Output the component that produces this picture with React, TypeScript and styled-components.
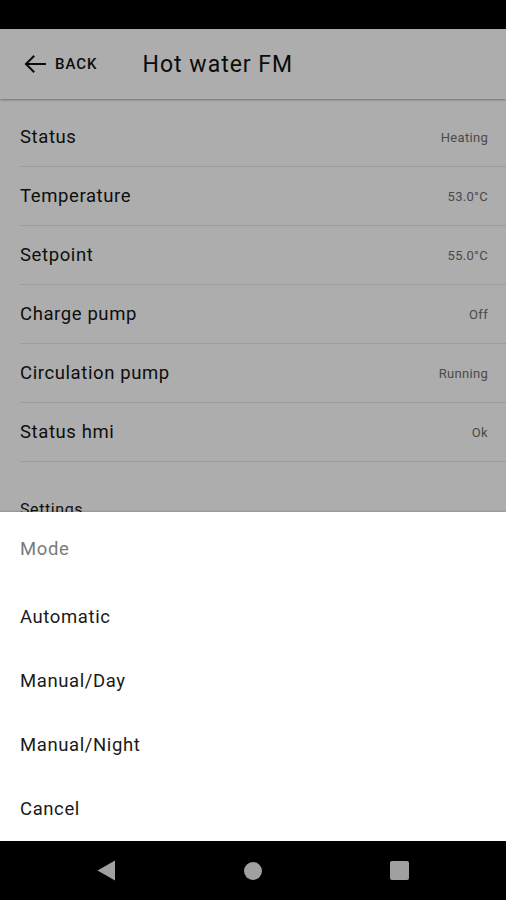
import React from "react";
import styled, { createGlobalStyle } from "styled-components";

const Global = createGlobalStyle`
  html, body { margin: 0; padding: 0; background: #000; }
  body { font-family: Roboto, "Noto Sans", "Liberation Sans", sans-serif; }
  * { box-sizing: border-box; }
`;

const Phone = styled.div`
  width: 506px;
  height: 900px;
  display: flex;
  flex-direction: column;
  overflow: hidden;
  background: #000;
`;

const StatusBar = styled.div`
  height: 29px;
  flex: none;
  background: #000;
`;

const Screen = styled.div`
  position: relative;
  flex: 1;
  background: #fff;
  overflow: hidden;
  display: flex;
  flex-direction: column;
`;

const Header = styled.header`
  height: 70px;
  flex: none;
  display: flex;
  align-items: center;
  background: #fff;
  box-shadow: 0 1px 2px rgba(0, 0, 0, 0.35);
  position: relative;
  z-index: 1;
`;

const BackButton = styled.button`
  display: flex;
  align-items: center;
  gap: 9px;
  margin-left: 23px;
  padding: 0;
  border: none;
  background: none;
  color: #111;
  font-family: inherit;
  font-size: 15px;
  font-weight: 500;
  letter-spacing: 1px;
  text-transform: uppercase;
`;

const Title = styled.h1`
  margin: 0 0 0 45px;
  font-size: 23px;
  font-weight: 400;
  letter-spacing: 1px;
  color: #111;
`;

const List = styled.div`
  padding-top: 9px;
  padding-left: 20px;
  display: flex;
  flex-direction: column;
`;

const Row = styled.div`
  height: 59px;
  display: flex;
  align-items: center;
  justify-content: space-between;
  padding-right: 18px;
  border-bottom: 1px solid #e6e6e6;
`;

const Label = styled.span`
  font-size: 18.5px;
  letter-spacing: 0.6px;
  color: #151515;
`;

const Value = styled.span`
  font-size: 13px;
  letter-spacing: 0.3px;
  color: #6e6e6e;
`;

const SectionTitle = styled.div`
  padding-top: 38px;
  font-size: 16px;
  letter-spacing: 0.6px;
  color: #151515;
`;

const Scrim = styled.div`
  position: absolute;
  inset: 0;
  background: rgba(0, 0, 0, 0.32);
  z-index: 2;
`;

const Sheet = styled.div`
  position: absolute;
  left: 0;
  right: 0;
  bottom: 0;
  z-index: 3;
  background: #fff;
  display: flex;
  flex-direction: column;
  box-shadow: 0 -1px 2px rgba(0, 0, 0, 0.15);
`;

const SheetTitle = styled.div`
  height: 73px;
  display: flex;
  align-items: center;
  padding-left: 20px;
  font-size: 18.5px;
  letter-spacing: 0.6px;
  color: #7a7a7a;
`;

const SheetItem = styled.div`
  height: 64px;
  display: flex;
  align-items: center;
  padding-left: 20px;
  font-size: 18.5px;
  letter-spacing: 0.6px;
  color: #1a1a1a;
`;

const NavBar = styled.nav`
  height: 59px;
  flex: none;
  background: #000;
  display: flex;
  align-items: center;
  justify-content: space-between;
  padding: 0 97px 0 97px;
`;

const NavCircle = styled.div`
  width: 18px;
  height: 18px;
  border-radius: 50%;
  background: #a0a0a0;
`;

const NavSquare = styled.div`
  width: 19px;
  height: 19px;
  border-radius: 2px;
  background: #a0a0a0;
`;

const rows: [string, string][] = [
  ["Status", "Heating"],
  ["Temperature", "53.0°C"],
  ["Setpoint", "55.0°C"],
  ["Charge pump", "Off"],
  ["Circulation pump", "Running"],
  ["Status hmi", "Ok"],
];

const options = ["Automatic", "Manual/Day", "Manual/Night", "Cancel"];

export default function App() {
  return (
    <Phone>
      <Global />
      <StatusBar />
      <Screen>
        <Header>
          <BackButton>
            <svg width="23" height="20" viewBox="0 0 23 20" fill="none">
              <path
                d="M22 10H3M10.5 2.5L3 10l7.5 7.5"
                stroke="#111"
                strokeWidth="2"
                strokeLinecap="square"
              />
            </svg>
            Back
          </BackButton>
          <Title>Hot water FM</Title>
        </Header>
        <List>
          {rows.map(([l, v]) => (
            <Row key={l}>
              <Label>{l}</Label>
              <Value>{v}</Value>
            </Row>
          ))}
          <SectionTitle>Settings</SectionTitle>
        </List>
        <Scrim />
        <Sheet>
          <SheetTitle>Mode</SheetTitle>
          {options.map((o) => (
            <SheetItem key={o}>{o}</SheetItem>
          ))}
        </Sheet>
      </Screen>
      <NavBar>
        <svg width="19" height="21" viewBox="0 0 19 21">
          <path d="M18 0.5V20.5L0.5 10.5Z" fill="#a0a0a0" />
        </svg>
        <NavCircle />
        <NavSquare />
      </NavBar>
    </Phone>
  );
}
